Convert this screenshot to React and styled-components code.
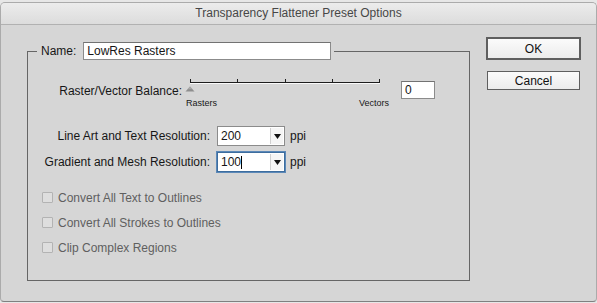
import React from 'react'
import styled, { createGlobalStyle } from 'styled-components'

const GlobalStyle = createGlobalStyle`
  html, body {
    margin: 0;
    padding: 0;
    background: #e7e7e7;
  }
  body {
    font-family: "Liberation Sans", Arial, sans-serif;
    font-size: 12px;
    color: #161616;
  }
`

const Window = styled.div`
  width: 597px;
  height: 300px;
  margin-top: 2px;
  box-sizing: border-box;
  border: 1px solid #ababab;
  border-bottom-color: #808080;
  border-radius: 5px 5px 4px 4px;
  background: #d6d6d6;
  overflow: hidden;
  display: flex;
  flex-direction: column;
`

const TitleBar = styled.div`
  height: 21px;
  line-height: 21px;
  text-align: center;
  color: #474747;
  font-size: 12px;
  background: linear-gradient(#ececec, #dcdcdc);
  border-bottom: 1px solid #b1b1b1;
`

const Body = styled.div`
  flex: 1;
  display: flex;
  align-items: flex-start;
  padding: 13px 0 0 26px;
`

const Group = styled.fieldset`
  margin: 4px 0 0;
  padding: 0 0 20px;
  width: 443px;
  box-sizing: border-box;
  border: 1px solid #666;
  min-inline-size: 0;
`

const Legend = styled.legend`
  margin-left: 9px;
  padding: 0 3px 0 4px;
`

const NameField = styled.div`
  display: flex;
  align-items: center;
  gap: 7px;
`

const TextBox = styled.div`
  width: ${p => p.$width}px;
  height: 18px;
  box-sizing: border-box;
  border: 1px solid #8b8b8b;
  border-top-color: #727272;
  background: #fff;
  padding-left: 3px;
  line-height: 16px;
  white-space: nowrap;
`

const BalanceRow = styled.div`
  display: flex;
  align-items: flex-start;
  margin-top: 19px;
`

const BalanceLabel = styled.div`
  width: 154px;
  margin-top: 5px;
  line-height: 14px;
  text-align: right;
  white-space: nowrap;
`

const Slider = styled.div`
  width: 208px;
  display: flex;
  flex-direction: column;
`

const SliderScale = styled.div`
  display: flex;
  justify-content: space-between;
  margin-top: 5px;
  padding: 0 1px 0 4px;
  font-size: 9px;
  line-height: 11px;
`

const NumberSlot = styled.div`
  margin: 2px 0 0 11px;
`

const ResList = styled.div`
  display: flex;
  flex-direction: column;
  gap: 6px;
  margin-top: 17px;
`

const ResRow = styled.div`
  display: flex;
  align-items: center;
  height: 20px;
`

const ResLabel = styled.div`
  width: 182px;
  margin-right: 7px;
  text-align: right;
  white-space: nowrap;
`

const Combo = styled.div`
  width: 68px;
  height: 20px;
  box-sizing: border-box;
  display: flex;
  background: #fff;
  border: 1px solid ${p => (p.$focused ? '#3d6d9e' : '#8b8b8b')};
  box-shadow: ${p => (p.$focused ? '0 0 0 1px #5b88b8' : 'none')};
`

const ComboText = styled.div`
  flex: 1;
  padding-left: 3px;
  line-height: 18px;
  display: flex;
  align-items: center;
`

const Caret = styled.span`
  display: inline-block;
  width: 1px;
  height: 13px;
  background: #000;
`

const ComboButton = styled.div`
  width: 12px;
  margin: 1px 1px 1px 0;
  border-left: 1px solid #d0d0d0;
  background: #f5f5f5;
  display: flex;
  align-items: center;
  justify-content: center;
`

const Unit = styled.span`
  margin-left: 5px;
`

const CheckList = styled.div`
  display: flex;
  flex-direction: column;
  margin-top: 13px;
  padding-left: 14px;
`

const CheckRow = styled.div`
  height: 25px;
  display: flex;
  align-items: center;
  gap: 5px;
  color: #5f5f5f;
`

const CheckBox = styled.span`
  width: 11px;
  height: 11px;
  box-sizing: border-box;
  border: 1px solid #b3b3b3;
  border-radius: 1px;
  background: #dedede;
`

const ButtonColumn = styled.div`
  display: flex;
  flex-direction: column;
  gap: 12px;
  margin-left: 17px;
`

const Button = styled.div`
  width: 93px;
  height: ${p => (p.$default ? 21 : 19)}px;
  box-sizing: border-box;
  border: 1px solid #5f5f5f;
  box-shadow: ${p => (p.$default ? '0 0 0 1px #5f5f5f' : 'none')};
  background: linear-gradient(#fbfbfb, #ececec);
  display: flex;
  align-items: center;
  justify-content: center;
  color: #111;
`

const ticks = [8, 55, 103, 150, 197]

function SliderTrack() {
  return (
    <svg width="208" height="14" viewBox="0 0 208 14">
      <rect x="8" y="3" width="190" height="1" fill="#1e1e1e" />
      <rect x="8" y="4" width="190" height="1" fill="#fafafa" />
      {ticks.map(x => (
        <rect key={x} x={x} y="0" width="1" height="4" fill="#1e1e1e" />
      ))}
      <polygon points="8,7.5 3.5,12.5 12.5,12.5" fill="#8e8e8e" />
      <polygon points="8,7.5 5.5,10.3 10.5,10.3" fill="#a9a9a9" />
    </svg>
  )
}

function Arrow() {
  return (
    <svg width="7" height="5" viewBox="0 0 7 5">
      <polygon points="0,0 7,0 3.5,5" fill="#111" />
    </svg>
  )
}

const resolutions = [
  { label: 'Line Art and Text Resolution:', value: '200' },
  { label: 'Gradient and Mesh Resolution:', value: '100', focused: true },
]

const options = [
  'Convert All Text to Outlines',
  'Convert All Strokes to Outlines',
  'Clip Complex Regions',
]

export default function App() {
  return (
    <>
      <GlobalStyle />
      <Window>
        <TitleBar>Transparency Flattener Preset Options</TitleBar>
        <Body>
          <Group>
            <Legend>
              <NameField>
                Name:
                <TextBox $width={248}>LowRes Rasters</TextBox>
              </NameField>
            </Legend>

            <BalanceRow>
              <BalanceLabel>Raster/Vector Balance:</BalanceLabel>
              <Slider>
                <SliderTrack />
                <SliderScale>
                  <span>Rasters</span>
                  <span>Vectors</span>
                </SliderScale>
              </Slider>
              <NumberSlot>
                <TextBox $width={34}>0</TextBox>
              </NumberSlot>
            </BalanceRow>

            <ResList>
              {resolutions.map(r => (
                <ResRow key={r.label}>
                  <ResLabel>{r.label}</ResLabel>
                  <Combo $focused={r.focused}>
                    <ComboText>
                      {r.value}
                      {r.focused && <Caret />}
                    </ComboText>
                    <ComboButton>
                      <Arrow />
                    </ComboButton>
                  </Combo>
                  <Unit>ppi</Unit>
                </ResRow>
              ))}
            </ResList>

            <CheckList>
              {options.map(o => (
                <CheckRow key={o}>
                  <CheckBox />
                  {o}
                </CheckRow>
              ))}
            </CheckList>
          </Group>

          <ButtonColumn>
            <Button $default>OK</Button>
            <Button>Cancel</Button>
          </ButtonColumn>
        </Body>
      </Window>
    </>
  )
}
